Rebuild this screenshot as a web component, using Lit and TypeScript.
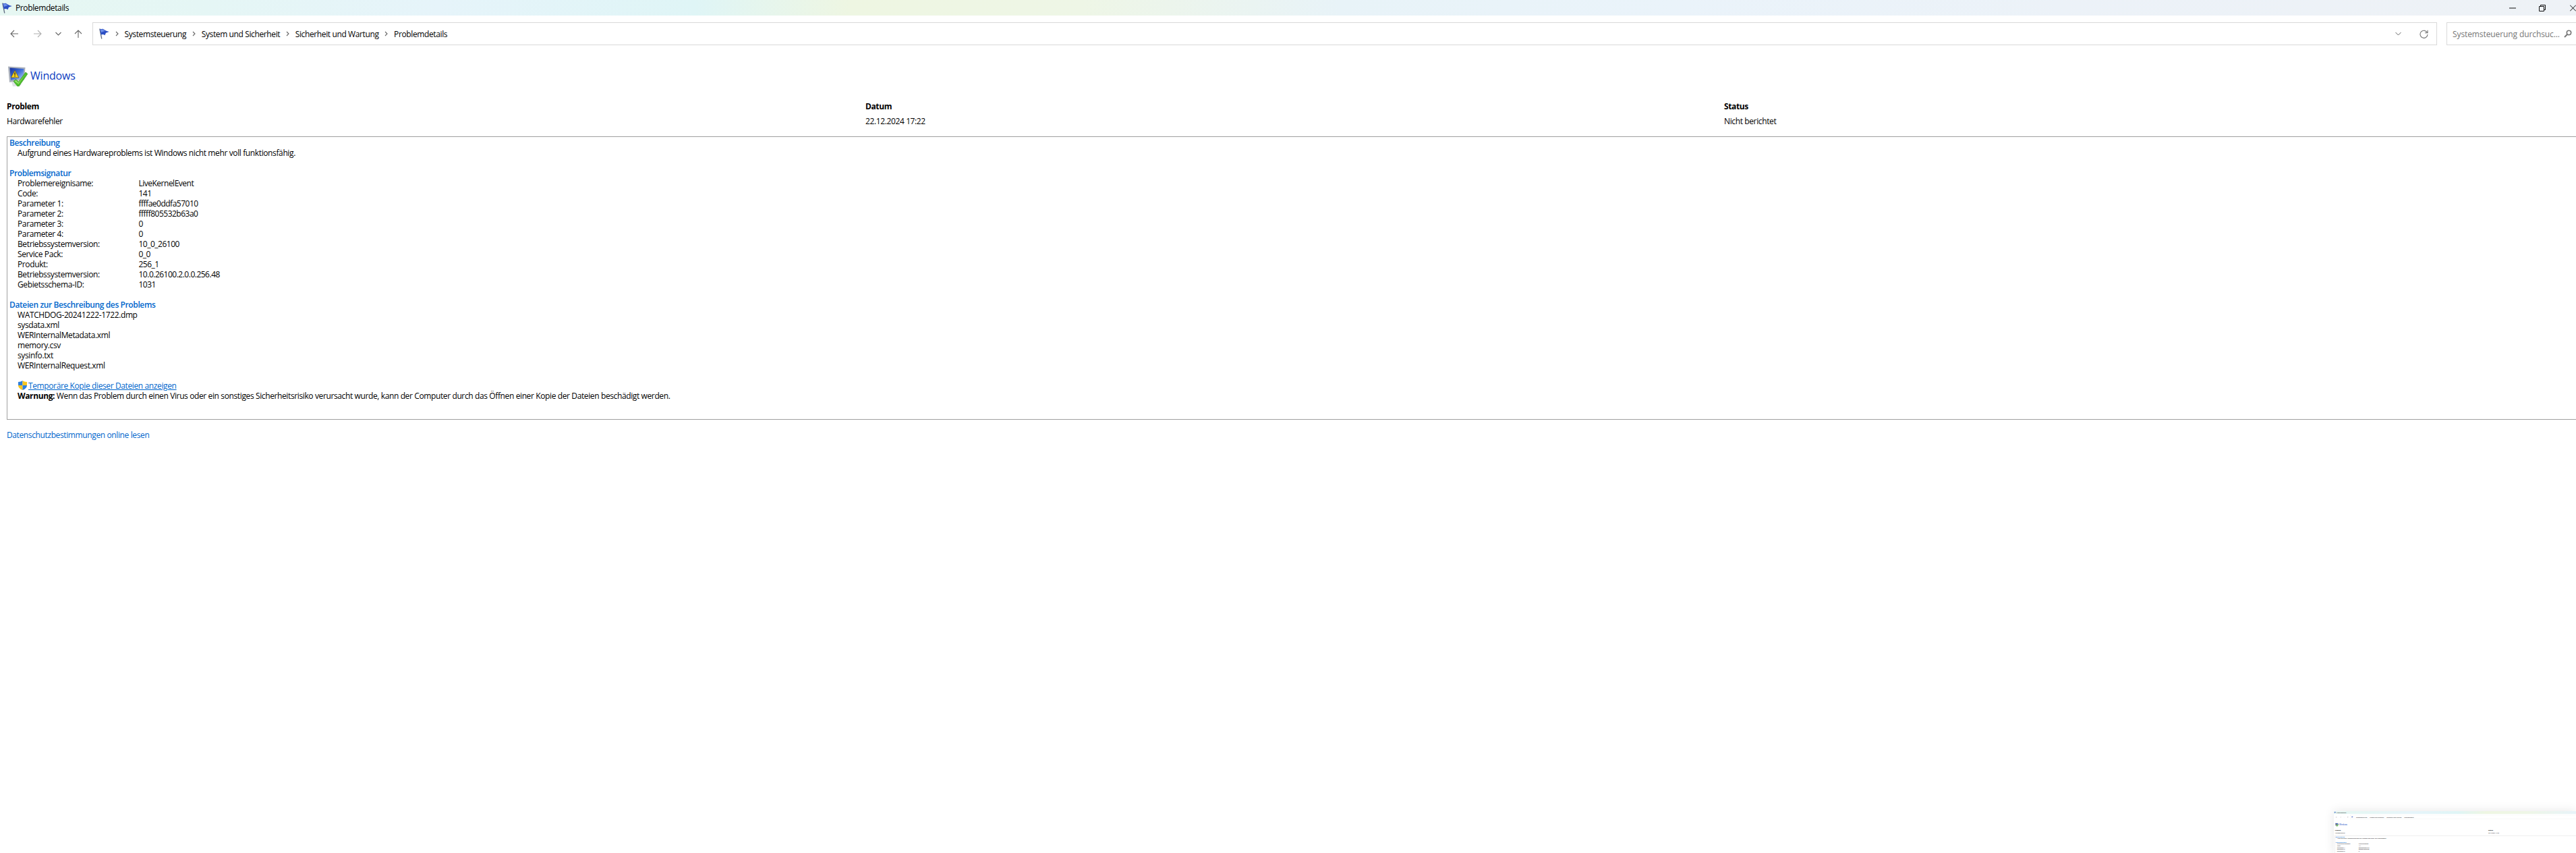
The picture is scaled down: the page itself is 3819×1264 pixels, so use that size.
import { LitElement, html, css, svg } from "lit";
import { customElement } from "lit/decorators.js";

const flag = svg`<path d="M1.800 .5 L4.800 15.500" stroke="#5f6b80" stroke-width="1.300" fill="none"/><path d="M2 1.200 L6.500 .8 C8.500 2 10.500 3.800 15.800 5 L11 6.800 L9.500 10.200 C7.500 8.800 5.500 8.800 3.600 9.600 Z" fill="#2c4fc4"/><path d="M2.600 1.800 L6.300 1.500 C7.500 2.500 8.500 3.200 9.800 3.800 L4 6 Z" fill="#6f8fe8"/>`;

const rows: [string, string][] = [
  ["Problemereignisame:", "LiveKernelEvent"],
  ["Code:", "141"],
  ["Parameter 1:", "ffffae0ddfa57010"],
  ["Parameter 2:", "fffff805532b63a0"],
  ["Parameter 3:", "0"],
  ["Parameter 4:", "0"],
  ["Betriebssystemversion:", "10_0_26100"],
  ["Service Pack:", "0_0"],
  ["Produkt:", "256_1"],
  ["Betriebssystemversion:", "10.0.26100.2.0.0.256.48"],
  ["Gebietsschema-ID:", "1031"],
];
const files = [
  "WATCHDOG-20241222-1722.dmp",
  "sysdata.xml",
  "WERInternalMetadata.xml",
  "memory.csv",
  "sysinfo.txt",
  "WERInternalRequest.xml",
];
const crumbs = ["Systemsteuerung", "System und Sicherheit", "Sicherheit und Wartung", "Problemdetails"];

@customElement("window-view")
export class WindowView extends LitElement {
  static styles = css`
    :host { display: block; width: 3819px; background: #fff; color: #000; font: 12px/15px "Open Sans", sans-serif; letter-spacing: -0.38px; }
    svg { display: block; flex: none; }
    .title { height: 23px; display: flex; align-items: center; padding-left: 2px;
      background: linear-gradient(90deg, #e6f7f2 0%, #e5f6f5 8%, #e6f4fa 17%, #dff5f6 27%, #eef6e2 33%, #eef6e6 42%, #e8f3f8 52%, #eaf3fa 65%, #ecf2f8 80%, #eef2f6 100%); }
    .title .t { margin-left: 5px; }
    .ctl { margin-left: auto; display: flex; }
    .ctl svg { margin-left: 34px; }
    .ctl .close { margin-left: 36px; }
    .nav { display: flex; height: 34px; margin-top: 10px; align-items: center; }
    .btns { width: 137px; flex: none; display: flex; align-items: center; padding-left: 15px; box-sizing: border-box; }
    .btns .fwd { margin-left: 23px; }
    .btns .down { margin-left: 20px; }
    .btns .up { margin-left: 19px; }
    .addr { width: 3476px; flex: none; height: 34px; box-sizing: border-box; border: 1px solid #d9d9d9; display: flex; align-items: center; padding-left: 8px; padding-right: 12px; }
    .crumb { margin-left: 8.5px; display: flex; align-items: center; }
    .crumb svg { margin-right: 9px; }
    .addr .end { margin-left: auto; display: flex; align-items: center; gap: 27px; }
    .search { margin-left: 14px; flex: 1; height: 34px; box-sizing: border-box; border: 1px solid #d9d9d9; border-right: 0; display: flex; align-items: center; padding-left: 8px; padding-right: 6px; color: #767676; justify-content: space-between; letter-spacing: -0.1px; }
    .body { padding: 30px 0 0 10px; }
    .logo { display: flex; align-items: center; height: 31px; gap: 4px; font-size: 16px; color: #0b3cc1; letter-spacing: -0.2px; }
    .table { display: grid; grid-template-columns: 1273px 1273px 1fr; row-gap: 7px; margin-top: 22px; }
    .table b { font-weight: 700; }
    .box { margin-top: 15px; border: 1px solid #a0a0a0; border-right: 0; padding: 1px 0 27px 3px; }
    .h { color: #0066cc; font-weight: 600; }
    .in { padding-left: 12px; }
    .gap { height: 15px; }
    .kv { display: grid; grid-template-columns: 179.5px 1fr; }
    .kv .v { letter-spacing: -0.5px; }
    .link { color: #0066cc; text-decoration: underline; }
    .linkrow { display: flex; align-items: center; height: 15px; }
    .shield { margin: -2px 2px 0 1px; }
    .priv { display: block; margin-top: 15px; color: #0066cc; }
  `;

  render() {
    const chev = svg`<path d="M1 1l3 3-3 3" stroke="#666" stroke-width="1.100" fill="none"/>`;
    return html`
      <div class="title">
        <svg width="16" height="16" viewBox="0 0 16 16">${flag}</svg>
        <span class="t">Problemdetails</span>
        <div class="ctl">
          <svg width="10" height="10" viewBox="0 0 10 10"><path d="M0 5h10" stroke="#111" fill="none"/></svg>
          <svg width="10" height="10" viewBox="0 0 10 10"><path d="M.5 2.500h7v7h-7zM2.500 2.500v-2h7v7h-2" stroke="#111" fill="none"/></svg>
          <svg class="close" width="9" height="10" viewBox="0 0 9 10"><path d="M0 .5l9 9M9 .5l-9 9" stroke="#111" fill="none"/></svg>
        </div>
      </div>
      <div class="nav">
        <div class="btns">
          <svg width="12" height="12" viewBox="0 0 12 12"><path d="M12 6H1M6 1L1 6l5 5" stroke="#666" stroke-width="1.100" fill="none"/></svg>
          <svg class="fwd" width="12" height="12" viewBox="0 0 12 12"><path d="M0 6h11M6 1l5 5-5 5" stroke="#b0b0b0" stroke-width="1.100" fill="none"/></svg>
          <svg class="down" width="9" height="6" viewBox="0 0 9 6"><path d="M.5 1l4 4 4-4" stroke="#666" stroke-width="1.100" fill="none"/></svg>
          <svg class="up" width="12" height="12" viewBox="0 0 12 12"><path d="M6 12V1M1 6l5-5 5 5" stroke="#666" stroke-width="1.100" fill="none"/></svg>
        </div>
        <div class="addr">
          <svg width="16" height="16" viewBox="0 0 16 16">${flag}</svg>
          ${crumbs.map(
            (c) => html`<div class="crumb"><svg width="5" height="8" viewBox="0 0 5 8">${chev}</svg>${c}</div>`
          )}
          <div class="end">
            <svg width="9" height="6" viewBox="0 0 9 6"><path d="M.5 1l4 4 4-4" stroke="#666" fill="none"/></svg>
            <svg width="13" height="13" viewBox="0 0 13 13"><path d="M11.500 4.500A5.500 5.500 0 1 0 12 7M12 .8v4H8" stroke="#777" stroke-width="1.100" fill="none"/></svg>
          </div>
        </div>
        <div class="search">
          <span>Systemsteuerung durchsuc...</span>
          <svg width="12" height="12" viewBox="0 0 12 12"><circle cx="7.500" cy="4.500" r="3.200" stroke="#777" stroke-width="1.600" fill="none"/><path d="M5 7l-4 4" stroke="#777" stroke-width="2" fill="none"/></svg>
        </div>
      </div>
      <div class="body">
        <div class="logo">
          <svg width="31" height="31" viewBox="0 0 31 31">
            <defs><linearGradient id="scr" x1="0" y1="0" x2="1" y2="1"><stop offset="0" stop-color="#16309c"/><stop offset=".5" stop-color="#3f6fd8"/><stop offset="1" stop-color="#c3d8f7"/></linearGradient></defs>
            <path d="M7 24l11-1 4 6-10 2H9z" fill="#dfe2e6"/>
            <path d="M2 1.500L27.500 3 26 21 4 25z" fill="#aab0bb"/>
            <path d="M4.500 3.500L25.500 5l-1.200 14L6 22z" fill="url(#scr)"/>
            <path d="M12 7.500l6 10.500H6.200z" fill="#f7d21a" stroke="#4a4420" stroke-width=".6"/>
            <path d="M11.300 10.500h1.500l-.2 4h-1.100zM11.400 15.200h1.300v1.400h-1.300z" fill="#1c1c1c"/>
            <path d="M10 23.500l3.500-3 4 3.800L28 10l3 2.500L18 31h-2z" fill="#4fbf2c" stroke="#2f8f1c" stroke-width=".6"/>
            <path d="M11.500 23.500l2-1.700 4 3.800L28.300 11.500 17.500 27.500z" fill="#93de6a"/>
          </svg>
          <span>Windows</span>
        </div>
        <div class="table">
          <b>Problem</b><b>Datum</b><b>Status</b>
          <span>Hardwarefehler</span><span>22.12.2024 17:22</span><span>Nicht berichtet</span>
        </div>
        <div class="box">
          <div class="h">Beschreibung</div>
          <div class="in">Aufgrund eines Hardwareproblems ist Windows nicht mehr voll funktionsfähig.</div>
          <div class="gap"></div>
          <div class="h">Problemsignatur</div>
          <div class="in kv">${rows.map((r) => html`<span>${r[0]}</span><span class="v">${r[1]}</span>`)}</div>
          <div class="gap"></div>
          <div class="h">Dateien zur Beschreibung des Problems</div>
          <div class="in">${files.map((f) => html`<div>${f}</div>`)}</div>
          <div class="gap"></div>
          <div class="in linkrow">
            <svg class="shield" width="13" height="14" viewBox="0 0 13 14">
              <path d="M6.500 0C4.800 1.300 2.500 2 0 2v5h6.500z" fill="#2f7fdc"/>
              <path d="M6.500 0c1.700 1.300 4 2 6.500 2v5H6.500z" fill="#f7c51e"/>
              <path d="M0 7h6.500v7C3 12.800 .2 10.500 0 7z" fill="#f7c51e"/>
              <path d="M6.500 7H13c-.2 3.500-3 5.800-6.500 7z" fill="#2f7fdc"/>
            </svg>
            <span class="link">Temporäre Kopie dieser Dateien anzeigen</span>
          </div>
          <div class="in"><b>Warnung:</b> Wenn das Problem durch einen Virus oder ein sonstiges Sicherheitsrisiko verursacht wurde, kann der Computer durch das Öffnen einer Kopie der Dateien beschädigt werden.</div>
        </div>
        <a class="priv">Datenschutzbestimmungen online lesen</a>
      </div>
    `;
  }
}

@customElement("app-root")
export class AppRoot extends LitElement {
  static styles = css`
    :host { display: block; position: relative; height: 1264px; overflow: hidden; background: #fff; }
    .thumb { position: absolute; left: 3460px; top: 1202px; width: 359px; height: 62px; overflow: hidden; background: #fff; box-shadow: 0 0 14px rgba(0,0,0,.1); }
    .thumb window-view { transform: scale(0.1785); transform-origin: 0 0; }
  `;
  render() {
    return html`
      <window-view></window-view>
      <div class="thumb"><window-view></window-view></div>
    `;
  }
}
